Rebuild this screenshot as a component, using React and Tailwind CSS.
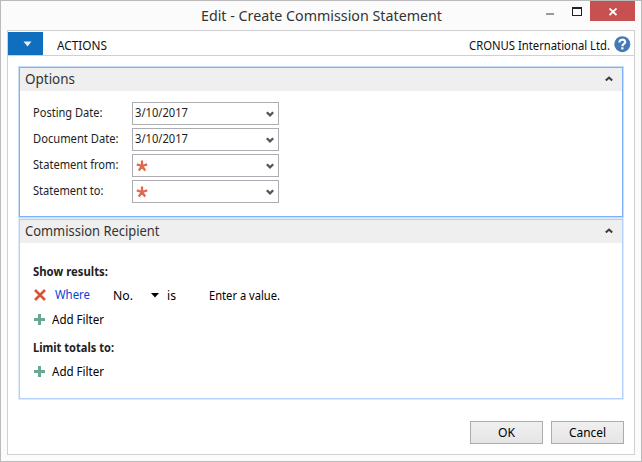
import { useLayoutEffect, useRef } from 'react';

// Single line of text condensed or widened to an exact width.
function Fit({ w, className = '', children }) {
  const ref = useRef(null);
  useLayoutEffect(() => {
    const el = ref.current;
    el.style.transform = 'none';
    el.style.transform = `scaleX(${w / el.getBoundingClientRect().width})`;
  }, [w, children]);
  return (
    <span className={`block shrink-0 whitespace-nowrap ${className}`} style={{ width: w }}>
      <span ref={ref} className="inline-block origin-left align-top">{children}</span>
    </span>
  );
}

function ChevronDown() {
  return (
    <svg width="8" height="7" viewBox="0 0 8 7" className="shrink-0">
      <path d="M0.8 1.2 L4 4.4 L7.2 1.2" fill="none" stroke="#555" strokeWidth="2.3" />
    </svg>
  );
}

function ChevronUp() {
  return (
    <svg width="8" height="6" viewBox="0 0 8 6" className="shrink-0">
      <path d="M0.8 4.6 L4 1.6 L7.2 4.6" fill="none" stroke="#3c3c3c" strokeWidth="2.1" />
    </svg>
  );
}

function Required() {
  return (
    <svg width="12" height="12" viewBox="0 0 12 12" className="mt-[5px] ml-[3px]">
      <path d="M6 6 V0.6 M6 6 L0.8 4.4 M6 6 L11.2 4.4 M6 6 L2.8 10.6 M6 6 L9.2 10.6" fill="none" stroke="#dc6a4e" strokeWidth="2.3" />
    </svg>
  );
}

function Field({ label, w, value }) {
  return (
    <div className="flex h-[23px]">
      <div className="w-[99px] pt-[3px] text-[#1e1e1e]"><Fit w={w}>{label}</Fit></div>
      <div className="flex w-[147px] justify-between border border-[#abadb3] bg-white pr-1">
        {value ? <Fit w={53} className="ml-[2px] pt-[2px] text-[#1e1e1e]">{value}</Fit> : <Required />}
        <div className="pt-[8px]"><ChevronDown /></div>
      </div>
    </div>
  );
}

function Header({ title, w }) {
  return (
    <div className="flex h-[23px] justify-between bg-[#efefef] pr-[9px] pl-[5px] text-[14px] leading-[20px] text-[#333]">
      <Fit w={w} className="pt-px">{title}</Fit>
      <div className="pt-[8px]"><ChevronUp /></div>
    </div>
  );
}

function AddFilter() {
  return (
    <div className="flex h-4">
      <svg width="12" height="12" viewBox="0 0 12 12" className="mt-[2px] ml-px">
        <path d="M5.5 0 V11 M0 5.5 H11" stroke="#69a892" strokeWidth="3" />
      </svg>
      <Fit w={52} className="ml-[6px] text-black">Add Filter</Fit>
    </div>
  );
}

function Button({ children, w }) {
  return (
    <button className="flex h-[23px] w-[73px] justify-center border border-[#acacac] bg-linear-to-b from-[#f0f0f0] to-[#e5e5e5] pt-[3px] text-black">
      <Fit w={w}>{children}</Fit>
    </button>
  );
}

export default function App() {
  return (
    <div className="flex h-[462px] w-[642px] flex-col border border-[#bababa] bg-[#fbfbfb] px-[6px] pb-[6px] font-['Noto_Sans','Open_Sans',sans-serif] text-[12px] leading-[16px]">
      <div className="flex h-[29px] shrink-0">
        <Fit w={241} className="ml-[194px] pt-[4px] text-[15px] leading-[20px] text-[#333]">Edit - Create Commission Statement</Fit>
        <div className="mt-[12px] ml-[104px] h-[2px] w-[8px] bg-[#999]" />
        <div className="mt-[6px] ml-[18px] h-[9px] w-[10px] border border-t-2 border-[#222]" />
        <div className="ml-[8px] flex h-5 w-[45px] shrink-0 justify-center bg-[#c75050] pt-[7px]">
          <svg width="8" height="8" viewBox="0 0 8 8">
            <path d="M0.5 0.5 L7.5 7 M7.5 0.5 L0.5 7" stroke="#fff" strokeWidth="1.8" />
          </svg>
        </div>
      </div>

      <div className="flex w-[628px] flex-1 flex-col border border-[#d0d0d0] bg-white">
        <div className="flex h-[25px] shrink-0 border-b border-[#d0d0d0] text-[#111]">
          <div className="mt-px flex h-[23px] w-[35px] justify-center bg-[#106ebe] pt-[9px] pl-[3px]">
            <svg width="9" height="6" viewBox="0 0 9 6"><path d="M0.5 0.5 H8.5 L4.5 5.5 Z" fill="#e4f0fa" /></svg>
          </div>
          <Fit w={50} className="ml-[14px] pt-[7px]">ACTIONS</Fit>
          <Fit w={141} className="ml-[362px] pt-[7px]">CRONUS International Ltd.</Fit>
          <svg width="17" height="17" viewBox="0 0 17 17" className="mt-[5px] ml-[4px] shrink-0">
            <circle cx="8.3" cy="8.2" r="8" fill="#4579b6" />
            <path d="M5.4 6.4 C5.4 2.9 11.2 2.9 11.2 6 C11.2 8 8.4 8 8.4 10.2" fill="none" stroke="#fff" strokeWidth="2.2" />
            <rect x="7.2" y="11.3" width="2.3" height="2.1" fill="#fff" />
          </svg>
        </div>

        <div className="mt-[10px] ml-[10px] w-[606px]">
          <div className="h-[152px] border border-[#c9defa]">
            <div className="h-full border border-[#7eb1fb]">
              <Header title="Options" w={50} />
              <div className="flex flex-col gap-[3px] pt-[11px] pl-[13px]">
                <Field label="Posting Date:" w={69.5} value="3/10/2017" />
                <Field label="Document Date:" w={85.5} value="3/10/2017" />
                <Field label="Statement from:" w={85.5} />
                <Field label="Statement to:" w={70.5} />
              </div>
            </div>
          </div>
          <div className="h-[182px] border border-[#dfebfc]">
            <div className="h-full border border-[#b2d0fb]">
              <Header title="Commission Recipient" w={134.5} />
              <div className="pt-[21px] pl-[13px]">
                <Fit w={75} className="h-4 font-bold text-[#222]">Show results:</Fit>
                <div className="mt-[7px] flex h-[17px]">
                  <svg width="12" height="12" viewBox="0 0 12 12" className="mt-[2px] ml-px">
                    <path d="M1 1 L11 11 M11 1 L1 11" stroke="#d95434" strokeWidth="2.6" />
                  </svg>
                  <Fit w={35} className="ml-[9px] text-[#0a3fd0]">Where</Fit>
                  <Fit w={20} className="ml-[23px] pt-px text-black">No.</Fit>
                  <svg width="8" height="5" viewBox="0 0 8 5" className="mt-[6px] ml-[18px]"><path d="M0 0 H8 L4 4.5 Z" fill="#000" /></svg>
                  <Fit w={9} className="ml-[8px] pt-px text-black">is</Fit>
                  <Fit w={71} className="ml-[32.5px] pt-px text-black">Enter a value.</Fit>
                </div>
                <div className="mt-[8px]"><AddFilter /></div>
                <Fit w={81} className="mt-[12px] h-4 font-bold text-[#222]">Limit totals to:</Fit>
                <div className="mt-[8px]"><AddFilter /></div>
              </div>
            </div>
          </div>
        </div>

        <div className="mt-[21px] mr-[10px] flex justify-end gap-[8px]">
          <Button w={17}>OK</Button>
          <Button w={37}>Cancel</Button>
        </div>
      </div>
    </div>
  );
}
